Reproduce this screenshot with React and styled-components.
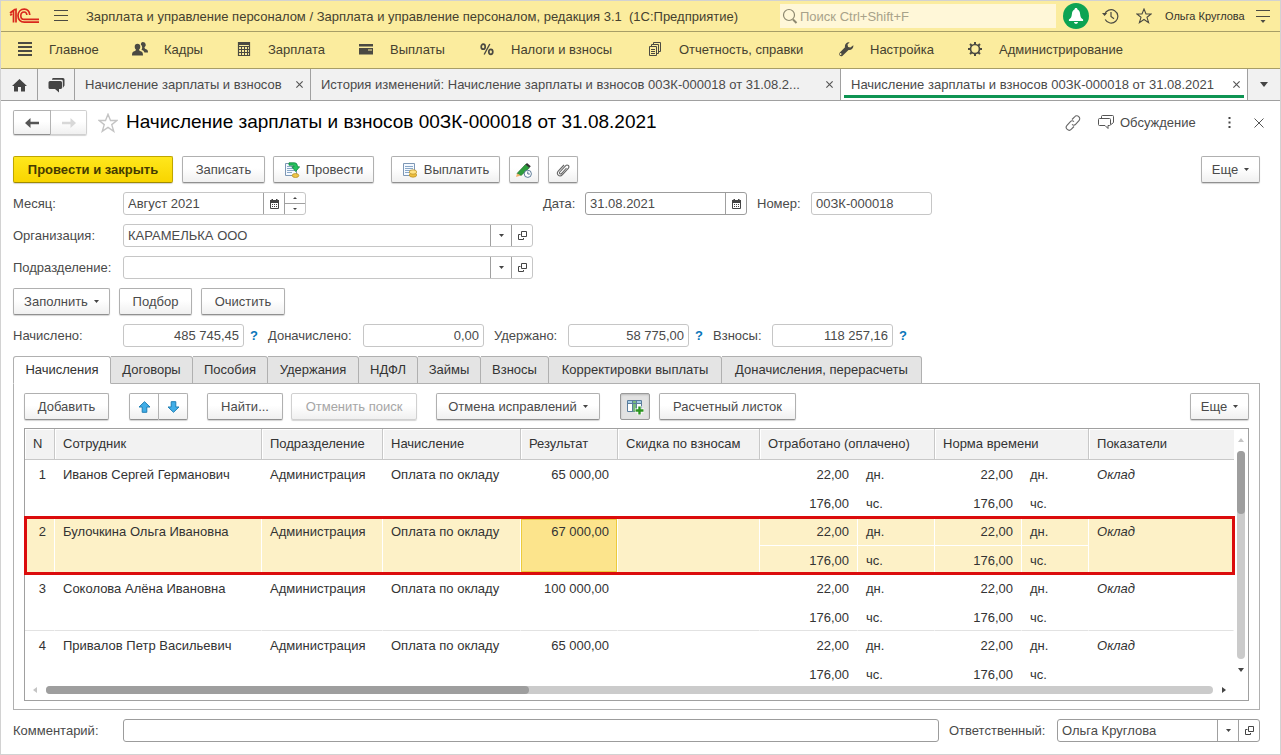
import React from "react";
import styled, { createGlobalStyle, css } from "styled-components";

const GlobalStyle = createGlobalStyle`
  *, *::before, *::after { box-sizing: border-box; }
  body { margin: 0; background: #fff; }
  body, button, input, select, textarea {
    font-family: "Liberation Sans", Arial, sans-serif;
    font-size: 13px;
    color: #4a4a4a;
  }
  svg { display: block; flex: none; }
`;

const Frame = styled.div`
  min-height: 100vh;
  display: flex;
  flex-direction: column;
  border: 1px solid #d2d2d2;
`;

/* ---------- window header ---------- */

const TitleBar = styled.header`
  display: flex;
  align-items: center;
  height: 31px;
  padding: 0 5px 0 8px;
  background: #fbec9e;
  border-bottom: 1px solid #a79e67;
`;

const AppTitle = styled.div`
  flex: 1;
  margin-left: 10px;
  color: #45412f;
  white-space: pre;
  overflow: hidden;
`;

const SearchBox = styled.label`
  display: flex;
  align-items: center;
  width: 276px;
  height: 24px;
  padding-left: 2px;
  gap: 2px;
  background: #fff7d8;
`;

const SearchInput = styled.input`
  flex: 1;
  min-width: 0;
  padding: 0;
  border: 0;
  outline: 0;
  background: none;
  &::placeholder { color: #a8a28a; opacity: 1; }
`;

const PlainButton = styled.button`
  display: flex;
  align-items: center;
  justify-content: center;
  width: ${(p) => p.$w || 24}px;
  height: 26px;
  padding: 0;
  border: 0;
  background: none;
  margin-left: ${(p) => p.$ml || 0}px;
`;

const UserName = styled.a`
  margin-left: 9px;
  width: 81px;
  font-size: 11px;
  color: #35322a;
  text-decoration: none;
  white-space: nowrap;
`;

const Sections = styled.nav`
  display: flex;
  align-items: center;
  height: 37px;
  padding: 0 0 2px 16px;
  background: #fbec9e;
  border-bottom: 1px solid #a79e67;
`;

const SectionLink = styled.a`
  display: flex;
  align-items: center;
  gap: 16px;
  width: ${(p) => p.$w}px;
  color: #45412f;
  text-decoration: none;
  white-space: nowrap;
`;

const WindowTabs = styled.div`
  display: flex;
  height: 32px;
  background: #f1f1f1;
  border-bottom: 1px solid #a0a0a0;
`;

const WindowIconTab = styled.button`
  display: flex;
  align-items: center;
  justify-content: center;
  width: ${(p) => p.$w || 37}px;
  padding: 0;
  border: 0;
  border-right: 1px solid #a0a0a0;
  background: none;
  &:last-child { border-right: 0; }
`;

const WindowTab = styled.div`
  display: flex;
  align-items: center;
  flex: ${(p) => p.$flex};
  min-width: 0;
  padding: 0 4px 0 10px;
  border-right: 1px solid #a0a0a0;
  background: ${(p) => (p.$active ? "#fff" : "none")};
  ${(p) =>
    p.$active &&
    css`
      box-shadow: inset 3px 0 #fff, inset -3px 0 #fff, inset 0 -2px #fff, inset 0 -5px #0e9453;
    `}
`;

const WindowTabName = styled.button`
  flex: 1;
  min-width: 0;
  padding: 0;
  border: 0;
  background: none;
  text-align: left;
  white-space: nowrap;
  overflow: hidden;
  text-overflow: ellipsis;
`;

/* ---------- form ---------- */

const Form = styled.main`
  flex: 1;
  display: flex;
  flex-direction: column;
  gap: 9px;
  padding: 9px 20px 11px 12px;
`;

const FormHeader = styled.div`
  display: flex;
  align-items: center;
  height: 25px;
  margin: 0 -9px 12px 0;
`;

const Heading = styled.h1`
  flex: 1;
  margin: 0 0 0 8px;
  padding-bottom: 2px;
  font-size: 19px;
  line-height: 22px;
  font-weight: 400;
  color: #000;
  white-space: nowrap;
`;

const HeaderLink = styled.a`
  display: flex;
  align-items: center;
  gap: 6px;
  margin-left: 17px;
  width: 116px;
  color: #4a4a4a;
  text-decoration: none;
`;

const Row = styled.div`
  display: flex;
  align-items: center;
  min-height: 23px;
`;

const Spacer = styled.div`
  flex: 1;
`;

const Gap = styled.div`
  width: ${(p) => p.$w}px;
`;

const Button = styled.button`
  display: flex;
  align-items: center;
  justify-content: center;
  gap: 6px;
  width: ${(p) => p.$w}px;
  height: ${(p) => p.$h || 27}px;
  padding: 0;
  border: 1px solid #b0b0b0;
  border-bottom-color: #909090;
  border-radius: 2px;
  background: linear-gradient(#fff, #fff 45%, #f0f0f0);
  box-shadow: 0 1px 1px #d4d4d4;
  white-space: nowrap;
  ${(p) =>
    p.$primary &&
    css`
      font-weight: 700;
      color: #453b00;
      border-color: #bfa600;
      border-bottom-color: #a08b00;
      background: linear-gradient(#ffe71c, #f8d500);
    `}
  ${(p) =>
    p.$pressed &&
    css`
      border-color: #999;
      background: #e2e2e2;
      box-shadow: inset 0 1px 2px #bbb;
    `}
  &:disabled {
    color: #a6a6a6;
    border-color: #d0d0d0;
  }
`;

const ButtonPair = styled.div`
  display: flex;
  ${Button}:first-child { border-radius: 2px 0 0 2px; }
  ${Button}:last-child { border-radius: 0 2px 2px 0; border-left: 0; }
`;

const Label = styled.label`
  width: ${(p) => p.$w}px;
  white-space: nowrap;
`;

const Field = styled.div`
  position: relative;
  display: flex;
  width: ${(p) => (p.$w ? p.$w + "px" : "auto")};
  flex: ${(p) => (p.$grow ? 1 : "none")};
  height: 23px;
  border: 1px solid ${(p) => (p.$dark ? "#9c9c9c" : "#c6c6c6")};
  border-radius: 3px;
  background: #fff;
`;

const controlStyle = css`
  flex: 1;
  min-width: 0;
  height: 21px;
  padding: 0 4px;
  border: 0;
  outline: 0;
  background: none;
`;

const TextInput = styled.input`
  ${controlStyle}
  text-align: ${(p) => (p.$right ? "right" : "left")};
`;

const Select = styled.select`
  ${controlStyle}
  appearance: none;
`;

const SelectMark = styled.span`
  position: absolute;
  right: 21px;
  top: 0;
  display: flex;
  align-items: center;
  justify-content: center;
  width: 21px;
  height: 21px;
  border-left: 1px solid #a0a0a0;
  pointer-events: none;
`;

const FieldButton = styled.button`
  display: flex;
  align-items: center;
  justify-content: center;
  width: 21px;
  padding: 0;
  border: 0;
  border-left: 1px solid #a0a0a0;
  background: none;
`;

const Spinner = styled.div`
  display: flex;
  flex-direction: column;
  width: 21px;
  border-left: 1px solid #a0a0a0;
`;

const SpinnerButton = styled.button`
  flex: 1;
  display: flex;
  align-items: center;
  justify-content: center;
  padding: 0;
  border: 0;
  background: none;
  & + & { border-top: 1px solid #a0a0a0; }
`;

const Help = styled.button`
  width: ${(p) => p.$w}px;
  padding: 0 0 0 6px;
  border: 0;
  background: none;
  color: #0a76ba;
  font-weight: 700;
  text-align: left;
`;

/* ---------- tabbed panel ---------- */

const Tabs = styled.div`
  display: flex;
  height: 28px;
`;

const Tab = styled.button`
  width: ${(p) => p.$w}px;
  padding: 0 0 1px;
  border: 1px solid #b0b0b0;
  border-left-width: 0;
  border-radius: 0 3px 0 0;
  background: #e4e4e4;
  color: #333;
  white-space: nowrap;
  &:first-child { border-left-width: 1px; border-radius: 3px 3px 0 0; }
  ${(p) =>
    p.$active &&
    css`
      background: #fff;
      border-bottom-color: #fff;
    `}
`;

const Panel = styled.section`
  margin-top: -1px;
  padding: 9px 10px 8px;
  border: 1px solid #b0b0b0;
  border-top: 0;
`;

const PanelEdge = styled.div`
  height: 1px;
  margin: -1px 0 0 98px;
  background: #b0b0b0;
`;

const PanelToolbar = styled.div`
  display: flex;
  height: 27px;
  margin: 1px 0 8px;
`;

const TableBox = styled.div`
  border: 1px solid #a0a0a0;
`;

const TableBody = styled.div`
  display: flex;
`;

const TableView = styled.div`
  flex: 1;
  min-width: 0;
  height: 254px;
  overflow-x: visible;
  overflow-y: clip;
`;

const Table = styled.table`
  width: 100%;
  table-layout: fixed;
  border-collapse: separate;
  border-spacing: 0;
  color: #333;
`;

const Th = styled.th`
  height: 31px;
  padding: 0 8px 1px;
  background: #f2f2f2;
  border-bottom: 1px solid #c8c8c8;
  border-right: 1px solid #c8c8c8;
  box-shadow: inset 1px 1px #fff;
  font-weight: 400;
  text-align: left;
  white-space: nowrap;
  &:last-child { border-right: 0; }
`;

const Td = styled.td`
  height: ${(p) => (p.$low ? 28 : 29)}px;
  padding: ${(p) => (p.rowSpan ? "7px 8px 0" : p.$low ? "2px 8px 0" : "0 8px")};
  vertical-align: ${(p) => (p.rowSpan ? "top" : "middle")};
  line-height: 15px;
  text-align: ${(p) => (p.$right ? "right" : "left")};
  font-style: ${(p) => (p.$italic ? "italic" : "normal")};
  white-space: nowrap;
  border-right: 1px solid transparent;
`;

const Entry = styled.tbody`
  tr:last-child > td, td[rowspan] { border-bottom: 1px solid #e2e2e2; }
  ${(p) =>
    p.$selected &&
    css`
      outline: 3px solid #db0c0c;
      outline-offset: -2px;
      ${Td} {
        background: #fdf1c7;
        border-right-color: #fff;
      }
      tr:first-child > td:not([rowspan]) { border-bottom: 1px solid #fff; }
      tr:first-child > ${Td}:nth-child(5) {
        background: #fce48c;
        box-shadow: inset 1px 0 #eccb3c, inset -1px 0 #eccb3c, inset 0 3px #eccb3c, inset 0 -2px #eccb3c;
      }
    `}
`;

const VScroll = styled.div`
  display: flex;
  flex-direction: column;
  align-items: center;
  justify-content: space-between;
  width: 14px;
  padding: 9px 0 11px;
`;

const VTrack = styled.div`
  width: 8px;
  height: 208px;
  border-radius: 4px;
  background: #cbcbcb;
`;

const VThumb = styled.div`
  height: 63px;
  border-radius: 4px;
  background: #9e9e9e;
`;

const HScroll = styled.div`
  display: flex;
  align-items: center;
  gap: 9px;
  height: 17px;
  padding: 0 22px 3px 8px;
`;

const HTrack = styled.div`
  flex: 1;
  height: 8px;
  border-radius: 4px;
  background: #cbcbcb;
`;

const HThumb = styled.div`
  width: 41.4%;
  height: 8px;
  border-radius: 4px;
  background: #9e9e9e;
`;

/* ---------- icons ---------- */

const DARK = "#4b4a42";

const Logo = () => (
  <svg width="30" height="16" viewBox="0 0 30 16" fill="none" stroke="#d9271c">
    <path d="M1 5 L4.5 2.5 V14.5 M1.2 7.4 L3 6 M7 14.5 V1.3 L5 1.8" strokeWidth="1.7" />
    <path d="M20.8 7 C20.3 3 17.8 1.2 15.3 1.2 C11.6 1.2 9 4 9 7.7 C9 11.5 11.6 14.2 15.3 14.2 H30" strokeWidth="1.7" />
    <path d="M17.9 7 C17.6 5 16.6 4 15.2 4 C13 4 11.8 5.6 11.8 7.7 C11.8 10 13.1 11.4 15.3 11.4 H30" strokeWidth="1.6" />
  </svg>
);
const Burger = () => (
  <svg width="14" height="12" viewBox="0 0 14 12" stroke={DARK} strokeWidth="1"><path d="M0 .5H14M0 5.5H14M0 10.5H14" /></svg>
);
const SearchIcon = () => (
  <svg width="16" height="16" viewBox="0 0 16 16" fill="none" stroke="#8d8870"><circle cx="7" cy="7" r="5.5" strokeWidth="1.2" /><path d="M11 11.5 L14.5 15" strokeWidth="2" /></svg>
);
const Bell = () => (
  <svg width="26" height="26" viewBox="0 0 26 26">
    <circle cx="13" cy="13" r="13" fill="#0da353" />
    <path d="M13 5c1 0 1.500.7 1.500 1.500 1.700.8 2.400 2.300 2.600 4.500.3 3 1 4.300 3 5.500v1.500H5.900v-1.500c2-1.200 2.700-2.500 3-5.500.2-2.200.9-3.700 2.600-4.500C11.500 5.700 12 5 13 5zM11 19h4c0 1.100-.9 1.800-2 1.800s-2-.7-2-1.800z" fill="#fff" />
  </svg>
);
const HistoryIcon = () => (
  <svg width="17" height="16" viewBox="0 0 17 16" fill="none" stroke={DARK} strokeWidth="1.2">
    <path d="M2.700 6.500 A6.700 6.700 0 1 1 3.200 11.500" /><path d="M9 4v4.500l3 2.200" /><path d="M0 5 L2.600 8 L5.200 5z" fill={DARK} stroke="none" />
  </svg>
);
const Star = ({ size = 16, color = DARK }) => (
  <svg width={size} height={size} viewBox="0 0 16 16" fill="none" stroke={color} strokeWidth="1.100"><path d="M8 1l2 5h5.200l-4.200 3.300 1.600 5.300L8 11.500l-4.600 3.100L5 9.300.8 6H6z" /></svg>
);
const ServiceMenu = () => (
  <svg width="14" height="13" viewBox="0 0 14 13"><path d="M0 .5H14M0 6.500H14" stroke={DARK} /><path d="M4.500 10h5L7 13z" fill={DARK} /></svg>
);

const NavIcons = {
  lines: (
    <svg width="16" height="16" viewBox="0 0 16 16" stroke={DARK} strokeWidth="2"><path d="M1 2H15M1 6H15M1 10H15M1 14H15" /></svg>
  ),
  people: (
    <svg width="16" height="16" viewBox="0 0 16 16" fill={DARK}>
      <path d="M10.800 1a2.900 2.900 0 0 1 1.700 5.300c.1 1.200.5 1.600 1.700 2 1.300.5 1.800 1.100 1.800 3.200h-3.600C12 10 11 9.300 9.500 8.800c1-1.600 1-3.900-.6-5.100C8.900 2 9.500 1 10.800 1z" />
      <path d="M5.500 2.800c1.800 0 2.800 1.300 2.800 3 0 1.200-.5 2.200-1.200 2.800 0 1 .4 1.300 1.700 1.700 1.600.5 2.200 1.300 2.200 4.200H0c0-2.900.6-3.700 2.200-4.200 1.300-.4 1.700-.7 1.700-1.700-.7-.6-1.200-1.600-1.200-2.800 0-1.700 1-3 2.800-3z" />
    </svg>
  ),
  calc: (
    <svg width="16" height="16" viewBox="0 0 16 16" fill="none" stroke={DARK}>
      <path d="M2.500 1.500h11v13h-11z" strokeWidth="1.200" /><path d="M3 3H13" strokeWidth="2" /><path d="M3 5.500H13M3 8.500H13M3 11.500H13M5.500 5V14M8.500 5V14M11.500 5V14" />
    </svg>
  ),
  card: (
    <svg width="16" height="16" viewBox="0 0 16 16" fill={DARK}><path d="M1 3h14v2.500H1zM1 7h14v6.500H1z" /><path d="M10 8.500h4v1h-4z" fill="#fbec9e" /></svg>
  ),
  percent: (
    <svg width="16" height="16" viewBox="0 0 16 16" fill="none" stroke={DARK} strokeWidth="1.700"><ellipse cx="4.200" cy="5.700" rx="2" ry="2.500" /><ellipse cx="11.800" cy="10.800" rx="2" ry="2.500" /><path d="M10.800 3L5.200 13.500" strokeWidth="1.400" /></svg>
  ),
  docs: (
    <svg width="16" height="16" viewBox="0 0 16 16" fill="none" stroke={DARK}>
      <path d="M2.500 5.500h7v9h-7zM4.500 5V3.500h7v9H10M6.500 3V1.500h7v9H12M4 8.500h4M4 10.500h4M4 12.500h4" />
    </svg>
  ),
  wrench: (
    <svg width="16" height="16" viewBox="0 0 16 16" fill={DARK}><path d="M15.300 4.200c.5 2.500-1.700 5.300-4.800 4.700L4.600 14.700c-1.800 1.600-4.700-.8-3-3L7 6.300C6.300 3.200 8.600.7 11.700 1.200L9.500 3.600l.6 2.300 2.300.6zM3 12.200a.9.9 0 1 0 .1 1.600.9.9 0 0 0-.1-1.600z" /></svg>
  ),
  gear: (
    <svg width="16" height="16" viewBox="0 0 16 16" fill="none" stroke={DARK}>
      <circle cx="8" cy="8" r="4.500" strokeWidth="1.700" />
      <path d="M8 1v2.500M8 12.500V15M1 8h2.500M12.500 8H15M3 3l1.800 1.800M11.200 11.200L13 13M13 3l-1.800 1.800M4.800 11.200L3 13" strokeWidth="2" />
    </svg>
  ),
};

const Home = () => (
  <svg width="15" height="14" viewBox="0 0 15 14" fill="#444"><path d="M7.500 1L15 8h-2v5.500H9V9H6v4.500H2V8H0z" /></svg>
);
const Chats = () => (
  <svg width="17" height="16" viewBox="0 0 17 16" fill="#444"><path d="M5 1h10a1.500 1.500 0 0 1 1.500 1.500v6L14.800 11V4a1.300 1.300 0 0 0-1.300-1.300H4A1.500 1.500 0 0 1 5 1z" /><path d="M2 4h10.500A1.500 1.500 0 0 1 14 5.500v5a1.500 1.500 0 0 1-1.500 1.500H11v3.500L7 12H2a1.500 1.500 0 0 1-1.500-1.500v-5A1.500 1.500 0 0 1 2 4z" /></svg>
);
const Cross = ({ size = 7, color = "#555" }) => (
  <svg width={size} height={size} viewBox="0 0 10 10" stroke={color} strokeWidth={size > 8 ? 1 : 1.6}><path d="M.5 .5L9.500 9.500M9.500 .5L.5 9.500" /></svg>
);
const Caret = ({ w = 5, h = 3, color = "#444", dir = "down" }) => {
  const paths = {
    down: `M0 0H${w}L${w / 2} ${h}z`,
    up: `M0 ${h}H${w}L${w / 2} 0z`,
    left: `M${w} 0V${h}L0 ${h / 2}z`,
    right: `M0 0V${h}L${w} ${h / 2}z`,
  };
  return <svg width={w} height={h} viewBox={`0 0 ${w} ${h}`} fill={color}><path d={paths[dir]} /></svg>;
};
const Arrow = ({ color, flip }) => (
  <svg width="14" height="12" viewBox="0 0 14 12" fill={color}><path d={flip ? "M14 6L8.500 1v3.800H0v2.400h8.500V11z" : "M0 6L5.500 1v3.800H14v2.400H5.500V11z"} /></svg>
);
const BlueArrow = ({ down }) => (
  <svg width="13" height="12" viewBox="0 0 13 12" fill="#41aee8" stroke="#1f7eb4"><path d={down ? "M6.500 11.300L1 6h3.200V.7h4.600V6H12z" : "M6.500 .7L1 6h3.200v5.300h4.600V6H12z"} /></svg>
);
const LinkIcon = () => (
  <svg width="16" height="16" viewBox="0 0 16 16" fill="none" stroke="#666" strokeWidth="1.100">
    <path d="M7 4.500l2.600-2.700a2.900 2.900 0 0 1 4.400 3.900l-3.200 3.500a2.700 2.700 0 0 1-3.800.2" /><path d="M9 11.500l-2.600 2.700A2.900 2.900 0 0 1 2 10.300l3.200-3.500A2.700 2.700 0 0 1 9 6.600" />
  </svg>
);
const Discuss = () => (
  <svg width="16" height="15" viewBox="0 0 16 15" fill="none" stroke="#555"><path d="M1.500 3.500h10a1 1 0 0 1 1 1v5a1 1 0 0 1-1 1H10v3l-3-3H1.500a1 1 0 0 1-1-1v-5a1 1 0 0 1 1-1z" /><path d="M3.500 3V1.500a1 1 0 0 1 1-1h10a1 1 0 0 1 1 1v6l-2.500 2" /></svg>
);
const Dots = () => (
  <svg width="3" height="11" viewBox="0 0 3 11" fill="#444"><path d="M.5 0h2v2h-2zM.5 4.500h2v2h-2zM.5 9h2v2h-2z" /></svg>
);
const Calendar = () => (
  <svg width="9" height="10" viewBox="0 0 9 10"><path d="M.5 1.500h8v8h-8z" fill="none" stroke="#444" /><path d="M0 1h9v3H0zM1.500 0h1.500v2H1.500zM6 0h1.500v2H6zM2 5h1v1H2zM4 5h1v1H4zM6 5h1v1H6zM2 7h1v1H2zM4 7h1v1H4zM6 7h1v1H6z" fill="#444" /></svg>
);
const OpenIcon = () => (
  <svg width="9" height="9" viewBox="0 0 9 9" fill="none" stroke="#444"><path d="M3.500 .5h5v5h-5zM2.500 3.500h-2v5h5V7" /></svg>
);
const Sheet = ({ green }) => (
  <svg width="16" height="16" viewBox="0 0 16 16">
    <path d="M1.500 1.500h11v12h-11z" fill="#f4f9ff" stroke="#7d97b5" />
    <path d="M3 4.500h8M3 6.500h8M3 8.500h8M3 10.500h5" stroke="#88a7c8" />
    {!green && <g stroke="#b58a1c" strokeWidth=".7"><ellipse cx="11" cy="13" rx="3.700" ry="2.200" fill="#eebf3f" /><ellipse cx="11" cy="10" rx="3.700" ry="2.200" fill="#ffe283" /></g>}
    {green && (
      <g>
        <ellipse cx="11.500" cy="13.500" rx="3.300" ry="2" fill="#eec548" stroke="#b58a1c" strokeWidth=".7" />
        <path d="M5 .8h5c2.500 0 3.500 1.700 3.500 4H15.600L11.700 9.500 7.800 4.800H10C10 3.500 9.500 3.200 8 3.200H5z" fill="#23c25d" stroke="#12853b" strokeWidth=".8" />
      </g>
    )}
  </svg>
);
const PencilClock = () => (
  <svg width="16" height="16" viewBox="0 0 16 16">
    <path d="M1 11.500L9.500 2.500l3.800 3.300L5 13.500z" fill="#2d9e3c" stroke="#1c6e29" strokeWidth=".7" />
    <path d="M9.500 2.500L11 1l3.800 3.300-1.500 1.500z" fill="#333" />
    <path d="M1 11.500L0 15l5-1.500z" fill="#f0b269" />
    <circle cx="11.800" cy="11.800" r="3.600" fill="#fff" stroke="#4c6c8c" strokeWidth=".9" /><path d="M11.800 9.500v2.500h2" fill="none" stroke="#4c6c8c" />
  </svg>
);
const Clip = () => (
  <svg width="14" height="14" viewBox="0 0 14 14" fill="none" stroke="#666" strokeWidth="1.100"><path d="M10.500 5L5.500 10.500c-1.200 1.200-2.800-.3-1.700-1.500L9.500 2.800c2-2 4.700.4 2.800 2.500L6.500 11.700c-3 3.200-7-.7-4.300-3.600L8 2" /></svg>
);
const ColumnsPlus = () => (
  <svg width="17" height="16" viewBox="0 0 17 16">
    <path d="M.5 1.500h14v11H.5z" fill="#fff" stroke="#5a7d9c" /><path d="M1 2h13v2.500H1z" fill="#a6cbe5" /><path d="M5.500 2h4v10.500h-4z" fill="#79bb7f" /><path d="M1 4.500H14M5.500 2V12.500M9.500 2V12.500" stroke="#5a7d9c" />
    <path d="M12.500 7v9M8 11.500h9" stroke="#fff" strokeWidth="4" /><path d="M12.500 7.500v8M8.500 11.500h8" stroke="#2d9421" strokeWidth="2.400" />
  </svg>
);

/* ---------- data ---------- */

const sections = [
  ["lines", "Главное", 115],
  ["people", "Кадры", 104],
  ["calc", "Зарплата", 122],
  ["card", "Выплаты", 121],
  ["percent", "Налоги и взносы", 168],
  ["docs", "Отчетность, справки", 191],
  ["wrench", "Настройка", 129],
  ["gear", "Администрирование", 160],
];

const pageTabs = [
  ["Начисления", 98],
  ["Договоры", 82],
  ["Пособия", 75],
  ["Удержания", 91],
  ["НДФЛ", 59],
  ["Займы", 63],
  ["Взносы", 68],
  ["Корректировки выплаты", 173],
  ["Доначисления, перерасчеты", 200],
];

const totals = [
  { id: "accrued", label: "Начислено:", labelWidth: 110, value: "485 745,45", help: 24 },
  { id: "extra", label: "Доначислено:", labelWidth: 95, value: "0,00", gap: 10 },
  { id: "withheld", label: "Удержано:", labelWidth: 74, value: "58 775,00", help: 24 },
  { id: "fees", label: "Взносы:", labelWidth: 59, value: "118 257,16", help: 20 },
];

const columns = [30, 207, 121, 138, 97, 142, 98, 77, 87, 67];

const employees = [
  ["Иванов Сергей Германович", "65 000,00"],
  ["Булочкина Ольга Ивановна", "67 000,00"],
  ["Соколова Алёна Ивановна", "100 000,00"],
  ["Привалов Петр Васильевич", "65 000,00"],
];

/* ---------- composed parts ---------- */

const Combo = ({ id, value, width, dark }) => (
  <Field $w={width} $dark={dark}>
    <Select id={id} defaultValue={value}>
      <option>{value}</option>
    </Select>
    <SelectMark><Caret w={5} h={3} /></SelectMark>
    <FieldButton aria-label="Открыть"><OpenIcon /></FieldButton>
  </Field>
);

const EmployeeRows = ({ index, name, amount }) => (
  <Entry $selected={index === 1}>
    <tr>
      <Td rowSpan={2} $right>{index + 1}</Td>
      <Td rowSpan={2}>{name}</Td>
      <Td rowSpan={2}>Администрация</Td>
      <Td rowSpan={2}>Оплата по окладу</Td>
      <Td rowSpan={2} $right>{amount}</Td>
      <Td rowSpan={2} />
      <Td $right>22,00</Td>
      <Td>дн.</Td>
      <Td $right>22,00</Td>
      <Td>дн.</Td>
      <Td rowSpan={2} $italic>Оклад</Td>
    </tr>
    <tr>
      <Td $low $right>176,00</Td>
      <Td $low>чс.</Td>
      <Td $low $right>176,00</Td>
      <Td $low>чс.</Td>
    </tr>
  </Entry>
);

export default function App() {
  return (
    <Frame>
      <GlobalStyle />
      <TitleBar>
        <Logo />
        <PlainButton $w={30} $ml={7} aria-label="Меню"><Burger /></PlainButton>
        <AppTitle>{"Зарплата и управление персоналом / Зарплата и управление персоналом, редакция 3.1  (1С:Предприятие)"}</AppTitle>
        <SearchBox>
          <SearchIcon />
          <SearchInput placeholder="Поиск Ctrl+Shift+F" aria-label="Поиск" />
        </SearchBox>
        <PlainButton $w={26} $ml={7} aria-label="Уведомления"><Bell /></PlainButton>
        <PlainButton $ml={9} aria-label="История"><HistoryIcon /></PlainButton>
        <PlainButton $ml={10} aria-label="Избранное"><Star /></PlainButton>
        <UserName href="#user">Ольга Круглова</UserName>
        <PlainButton $ml={5} aria-label="Сервис"><ServiceMenu /></PlainButton>
      </TitleBar>

      <Sections>
        {sections.map(([icon, name, width]) => (
          <SectionLink key={name} href={"#" + icon} $w={width}>
            {NavIcons[icon]}
            {name}
          </SectionLink>
        ))}
      </Sections>

      <WindowTabs>
        <WindowIconTab aria-label="Начальная страница"><Home /></WindowIconTab>
        <WindowIconTab aria-label="Обсуждения"><Chats /></WindowIconTab>
        <WindowTab $flex="0 0 236px">
          <WindowTabName>Начисление зарплаты и взносов</WindowTabName>
          <PlainButton $w={14} aria-label="Закрыть"><Cross /></PlainButton>
        </WindowTab>
        <WindowTab $flex="0 1 530px">
          <WindowTabName>История изменений: Начисление зарплаты и взносов 00ЗК-000018 от 31.08.2...</WindowTabName>
          <PlainButton $w={14} aria-label="Закрыть"><Cross /></PlainButton>
        </WindowTab>
        <WindowTab $flex="1 0 400px" $active>
          <WindowTabName>Начисление зарплаты и взносов 00ЗК-000018 от 31.08.2021</WindowTabName>
          <PlainButton $w={14} aria-label="Закрыть"><Cross /></PlainButton>
        </WindowTab>
        <WindowIconTab $w={32} aria-label="Список окон"><Caret w={8} h={5} /></WindowIconTab>
      </WindowTabs>

      <Form>
        <FormHeader>
          <ButtonPair>
            <Button $w={38} $h={25} aria-label="Назад"><Arrow color="#555" /></Button>
            <Button $w={36} $h={25} disabled aria-label="Вперед"><Arrow color="#d8d8d8" flip /></Button>
          </ButtonPair>
          <PlainButton $w={20} $ml={11} aria-label="В избранное"><Star size={20} color="#c4c4c4" /></PlainButton>
          <Heading>Начисление зарплаты и взносов 00ЗК-000018 от 31.08.2021</Heading>
          <PlainButton $w={16} aria-label="Ссылка"><LinkIcon /></PlainButton>
          <HeaderLink href="#discussion"><Discuss />Обсуждение</HeaderLink>
          <PlainButton $w={20} $ml={5} aria-label="Еще действия"><Dots /></PlainButton>
          <PlainButton $w={20} $ml={10} aria-label="Закрыть форму"><Cross size={10} /></PlainButton>
        </FormHeader>

        <Row>
          <Button $w={160} $primary>Провести и закрыть</Button>
          <Gap $w={9} />
          <Button $w={83}>Записать</Button>
          <Gap $w={8} />
          <Button $w={101}><Sheet green />Провести</Button>
          <Gap $w={17} />
          <Button $w={109}><Sheet />Выплатить</Button>
          <Gap $w={9} />
          <Button $w={30} aria-label="Исправить"><PencilClock /></Button>
          <Gap $w={9} />
          <Button $w={30} aria-label="Файлы"><Clip /></Button>
          <Spacer />
          <Button $w={59}>Еще<Caret /></Button>
        </Row>

        <Row>
          <Label $w={110} htmlFor="month">Месяц:</Label>
          <Field $w={183}>
            <TextInput id="month" defaultValue="Август 2021" />
            <FieldButton aria-label="Календарь"><Calendar /></FieldButton>
            <Spinner>
              <SpinnerButton aria-label="Следующий месяц"><Caret w={4} h={2} dir="up" /></SpinnerButton>
              <SpinnerButton aria-label="Предыдущий месяц"><Caret w={4} h={2} /></SpinnerButton>
            </Spinner>
          </Field>
          <Gap $w={237} />
          <Label $w={42} htmlFor="date">Дата:</Label>
          <Field $w={162} $dark>
            <TextInput id="date" defaultValue="31.08.2021" />
            <FieldButton aria-label="Календарь"><Calendar /></FieldButton>
          </Field>
          <Gap $w={10} />
          <Label $w={54} htmlFor="number">Номер:</Label>
          <Field $w={121}>
            <TextInput id="number" defaultValue="00ЗК-000018" />
          </Field>
        </Row>

        <Row>
          <Label $w={110} htmlFor="org">Организация:</Label>
          <Combo id="org" value="КАРАМЕЛЬКА ООО" width={410} />
        </Row>

        <Row>
          <Label $w={110} htmlFor="dept">Подразделение:</Label>
          <Combo id="dept" value="" width={410} />
        </Row>

        <Row>
          <Button $w={97}>Заполнить<Caret /></Button>
          <Gap $w={9} />
          <Button $w={73}>Подбор</Button>
          <Gap $w={9} />
          <Button $w={84}>Очистить</Button>
        </Row>

        <Row>
          {totals.map((t) => (
            <React.Fragment key={t.id}>
              <Label $w={t.labelWidth} htmlFor={t.id}>{t.label}</Label>
              <Field $w={121}>
                <TextInput id={t.id} defaultValue={t.value} $right />
              </Field>
              {t.help ? <Help $w={t.help} aria-label="Подсказка">?</Help> : <Gap $w={t.gap} />}
            </React.Fragment>
          ))}
        </Row>

        <div>
          <Tabs role="tablist">
            {pageTabs.map(([name, width], i) => (
              <Tab key={name} role="tab" aria-selected={i === 0} $active={i === 0} $w={width}>{name}</Tab>
            ))}
          </Tabs>
          <PanelEdge />
          <Panel>
            <PanelToolbar>
              <Button $w={85}>Добавить</Button>
              <Gap $w={20} />
              <ButtonPair>
                <Button $w={30} aria-label="Вверх"><BlueArrow /></Button>
                <Button $w={29} aria-label="Вниз"><BlueArrow down /></Button>
              </ButtonPair>
              <Gap $w={19} />
              <Button $w={76}>Найти...</Button>
              <Gap $w={8} />
              <Button $w={126} disabled>Отменить поиск</Button>
              <Gap $w={19} />
              <Button $w={164}>Отмена исправлений<Caret /></Button>
              <Gap $w={20} />
              <Button $w={30} $pressed aria-label="Настройка колонок"><ColumnsPlus /></Button>
              <Gap $w={9} />
              <Button $w={137}>Расчетный листок</Button>
              <Spacer />
              <Button $w={59}>Еще<Caret /></Button>
            </PanelToolbar>

            <TableBox>
              <TableBody>
                <TableView>
                  <Table>
                    <colgroup>
                      {columns.map((w, i) => <col key={i} width={w} />)}
                      <col />
                    </colgroup>
                    <thead>
                      <tr>
                        <Th>N</Th>
                        <Th>Сотрудник</Th>
                        <Th>Подразделение</Th>
                        <Th>Начисление</Th>
                        <Th>Результат</Th>
                        <Th>Скидка по взносам</Th>
                        <Th colSpan={2}>Отработано (оплачено)</Th>
                        <Th colSpan={2}>Норма времени</Th>
                        <Th>Показатели</Th>
                      </tr>
                    </thead>
                    {employees.map(([name, amount], i) => (
                      <EmployeeRows key={name} index={i} name={name} amount={amount} />
                    ))}
                  </Table>
                </TableView>
                <VScroll>
                  <Caret w={6} h={4} dir="up" color="#c4c4c4" />
                  <VTrack><VThumb /></VTrack>
                  <Caret w={6} h={4} />
                </VScroll>
              </TableBody>
              <HScroll>
                <Caret w={4} h={6} dir="left" color="#c4c4c4" />
                <HTrack><HThumb /></HTrack>
                <Caret w={4} h={6} dir="right" />
              </HScroll>
            </TableBox>
          </Panel>
        </div>

        <Row>
          <Label $w={110} htmlFor="comment">Комментарий:</Label>
          <Field $grow $dark>
            <TextInput id="comment" />
          </Field>
          <Gap $w={10} />
          <Label $w={108} htmlFor="owner">Ответственный:</Label>
          <Combo id="owner" value="Ольга Круглова" width={203} dark />
        </Row>
      </Form>
    </Frame>
  );
}
